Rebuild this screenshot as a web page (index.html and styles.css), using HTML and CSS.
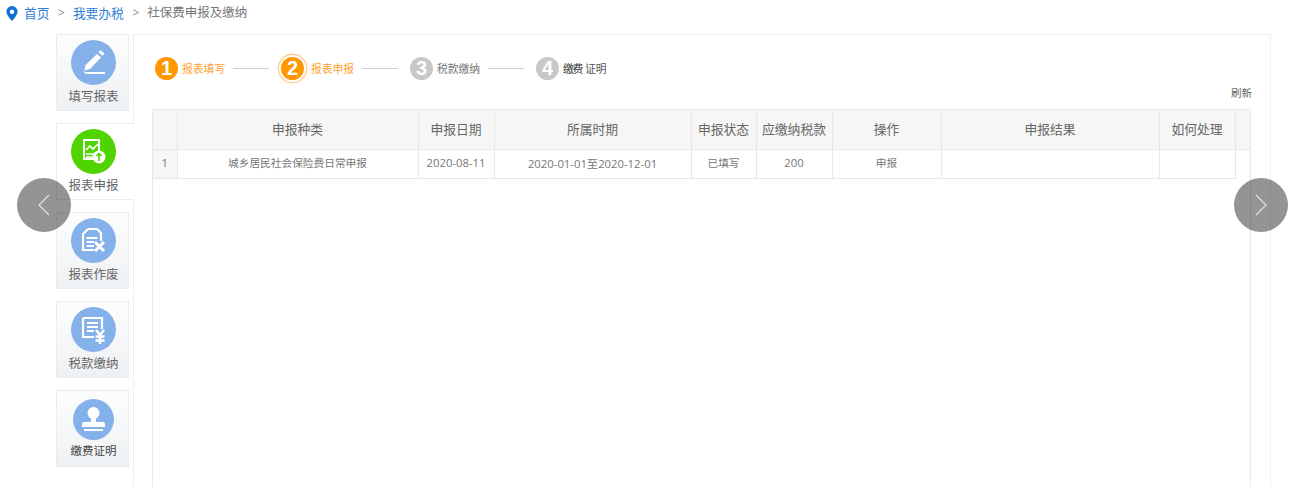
FILE: index.html
```html
<!DOCTYPE html>
<html lang="zh-CN">
<head>
<meta charset="utf-8">
<title>社保费申报及缴纳</title>
<link rel="stylesheet" href="styles.css">
</head>
<body>
<nav class="crumbs">
  <svg class="pin" width="12" height="15" viewBox="0 0 12 15"><path fill="#0f6fd6" fill-rule="evenodd" d="M6 0a5.6 5.6 0 0 0-5.6 5.6C.4 9.400 6 15 6 15s5.600-5.600 5.600-9.400A5.600 5.600 0 0 0 6 0zm0 3.500a2.200 2.200 0 1 1 0 4.400 2.200 2.200 0 0 1 0-4.400z"/></svg>
  <a class="crumb-link">首页</a><span class="sep">&gt;</span><a class="crumb-link">我要办税</a><span class="sep">&gt;</span><span class="crumb-current">社保费申报及缴纳</span>
</nav>
<div class="page">
  <aside class="tabs">
    <div class="tab">
      <span class="badge"><svg width="45" height="45" viewBox="0 0 45 45"><path fill="#fff" d="M29.500 10l4 3.500-2 2.200-4-3.500zM26 14l4 3.500-11 11.500-5.500 1.500 1-5.500zM11 30.500l3 1.500h20v2H15z"/></svg></span>
      <span class="tab-label">填写报表</span>
    </div>
    <div class="tab active">
      <span class="badge green"><svg width="45" height="45" viewBox="0 0 45 45"><path fill="none" stroke="#fff" stroke-width="2" d="M13 11h15v19H13z"/><path fill="none" stroke="#fff" stroke-width="1.600" d="M15 21l4-4 3 3 5-5M15 25h10M15 28h8"/><circle cx="28" cy="28" r="6.500" fill="#fff"/><path fill="none" stroke="#4fd400" stroke-width="1.600" d="M28 32v-7M25.500 27l2.500-2.500 2.500 2.500"/></svg></span>
      <span class="tab-label">报表申报</span>
    </div>
    <div class="tab">
      <span class="badge"><svg width="45" height="45" viewBox="0 0 45 45"><path fill="none" stroke="#fff" stroke-width="2.200" d="M17 11h9l4 4v9M17 11l-5 5v16h14"/><path fill="none" stroke="#fff" stroke-width="2" d="M15.500 20h11M15.500 24h10M15.500 28h8"/><rect x="23" y="23" width="12" height="12" fill="#85b1ea"/><path fill="none" stroke="#fff" stroke-width="3" d="M24 24l9 9M33 24l-9 9"/></svg></span>
      <span class="tab-label">报表作废</span>
    </div>
    <div class="tab">
      <span class="badge"><svg width="45" height="45" viewBox="0 0 45 45"><path fill="none" stroke="#fff" stroke-width="2.200" d="M12 11h19v12M12 11v19h13"/><path fill="none" stroke="#fff" stroke-width="2" d="M16 16h11M16 20h11M16 24h7"/><rect x="23" y="22" width="12" height="15" fill="#85b1ea"/><path fill="none" stroke="#fff" stroke-width="2.600" d="M25 23l4 5 4-5M29 28v9M24.500 29.500h9M24.500 33.500h9"/></svg></span>
      <span class="tab-label">税款缴纳</span>
    </div>
    <div class="tab last">
      <span class="badge small"><svg width="41" height="41" viewBox="0 0 41 41"><circle cx="20.500" cy="14" r="6" fill="#fff"/><path fill="#fff" d="M18 19h5v4h7a2 2 0 0 1 2 2v3H9v-3a2 2 0 0 1 2-2h7zM11 30h19v2H11z"/></svg></span>
      <span class="tab-label dark">缴费证明</span>
    </div>
  </aside>
  <main class="panel">
    <ol class="steps">
      <li class="step done"><span class="num">1</span><span class="step-label">报表填写</span></li>
      <li class="rule"></li>
      <li class="step current"><span class="num">2</span><span class="step-label">报表申报</span></li>
      <li class="rule"></li>
      <li class="step"><span class="num">3</span><span class="step-label">税款缴纳</span></li>
      <li class="rule"></li>
      <li class="step"><span class="num">4</span><span class="step-label dark"><span class="tight">缴费</span> 证明</span></li>
    </ol>
    <div class="toolbar"><a class="refresh">刷新</a></div>
    <div class="grid">
      <table>
        <colgroup>
          <col class="c-idx"><col class="c-type"><col class="c-date"><col class="c-period"><col class="c-state"><col class="c-tax"><col class="c-op"><col class="c-result"><col class="c-how"><col class="c-gutter">
        </colgroup>
        <thead>
          <tr><th></th><th>申报种类</th><th>申报日期</th><th>所属时期</th><th>申报状态</th><th>应缴纳税款</th><th>操作</th><th>申报结果</th><th>如何处理</th><th></th></tr>
        </thead>
        <tbody>
          <tr><td class="idx digits">1</td><td>城乡居民社会保险费日常申报</td><td class="digits">2020-08-11</td><td class="digits">2020-01-01至2020-12-01</td><td>已填写</td><td class="digits">200</td><td>申报</td><td></td><td></td><td class="gutter"></td></tr>
        </tbody>
      </table>
    </div>
  </main>
</div>
<button class="arrow prev" aria-label="上一页"><svg width="14" height="24" viewBox="0 0 14 24"><path fill="none" stroke="#e4e4e4" stroke-width="1.200" d="M12 2L2 12l10 10"/></svg></button>
<button class="arrow next" aria-label="下一页"><svg width="14" height="24" viewBox="0 0 14 24"><path fill="none" stroke="#e4e4e4" stroke-width="1.200" d="M2 2l10 10L2 22"/></svg></button>
</body>
</html>
```
FILE: styles.css
```css
* { box-sizing: border-box; }
html, body { margin: 0; height: 487px; overflow: hidden; }
body {
  position: relative;
  background: #fff;
  color: #666;
  font-family: "Open Sans", "Noto Sans CJK SC", sans-serif;
  font-size: 12px;
}
.crumbs {
  display: flex;
  align-items: center;
  height: 26px;
  padding-left: 6px;
  font-size: 12.75px;
  line-height: 26px;
}
.pin { margin-right: 6px; }
.crumb-link { color: #2f7fd8; }
.crumb-current { color: #777; font-size: 12.5px; }
.sep { margin: 0 8px 0 8.5px; color: #888; font-size: 12px; }
.page {
  display: flex;
  align-items: flex-start;
  padding: 8px 43px 0 56px;
}
.tabs {
  position: relative;
  z-index: 1;
  display: flex;
  flex: 0 0 78px;
  flex-direction: column;
}
.tab {
  display: flex;
  flex-direction: column;
  align-items: center;
  width: 73px;
  height: 76.5px;
  margin-bottom: 12.5px;
  padding: 5px 0 0 2px;
  border: 1px solid #e9edf2;
  background: linear-gradient(#fdfdfd, #eef1f3);
}
.tab.active {
  width: 78px;
  padding-right: 6px;
  border-right: 0;
  background: #fff;
}
.badge {
  display: flex;
  align-items: center;
  justify-content: center;
  width: 45px;
  height: 45px;
  border-radius: 50%;
  background: #85b1ea;
}
.badge.green { background: #4fd400; }
.badge.small { width: 41px; height: 41px; margin-top: 3px; }
.tab-label {
  margin-top: 3px;
  color: #666;
  font-size: 12.5px;
  line-height: 18px;
  white-space: nowrap;
}
.tab-label.dark { margin-top: 2px; color: #444; font-size: 11.5px; }
.panel {
  flex: 1;
  height: 460px;
  margin-left: -1px;
  padding: 19px 19px 0 18px;
  border: 1px solid #eceff3;
  border-bottom: 0;
}
.steps {
  display: flex;
  align-items: center;
  height: 29px;
  margin: 0;
  padding: 0 0 0 3px;
  list-style: none;
}
.step { display: flex; align-items: center; }
.num {
  display: flex;
  align-items: center;
  justify-content: center;
  width: 23px;
  height: 23px;
  border-radius: 50%;
  background: #c8c8c8;
  color: #fff;
  font-family: "Liberation Sans", sans-serif;
  font-size: 20px;
  font-weight: 700;
}
.step-label {
  margin-left: 4px;
  padding-bottom: 1px;
  color: #777;
  font-size: 10.8px;
  white-space: nowrap;
}
.step-label.dark { color: #555; }
.tight { letter-spacing: -1.2px; color: #333; }
.done .num, .current .num { background: #ff9800; }
.done .step-label, .current .step-label { color: #ff9f2e; }
.current .num { box-shadow: 0 0 0 2px #fff, 0 0 0 3.4px #ffcf95; }
.current .step-label { margin-left: 7px; }
.rule {
  width: 35.8px;
  height: 1px;
  margin: 0 12px 0 8px;
  background: #cfcfcf;
}
.toolbar {
  display: flex;
  justify-content: flex-end;
  height: 26px;
  padding-top: 2px;
  line-height: 16px;
  margin-right: -1px;
}
.refresh { color: #666; font-size: 10.5px; }
.grid {
  width: 1099px;
  height: 400px;
  border: 1px solid #e8e8e8;
  border-bottom: 0;
}
table {
  width: 100%;
  border-collapse: collapse;
  table-layout: fixed;
}
.c-idx { width: 24px; }
.c-type { width: 241px; }
.c-date { width: 76px; }
.c-period { width: 197px; }
.c-state { width: 65px; }
.c-tax { width: 76px; }
.c-op { width: 109px; }
.c-result { width: 218px; }
.c-how { width: 76px; }
th, td {
  padding: 0 0 2px;
  border: 1px solid #e8e8e8;
  text-align: center;
  white-space: nowrap;
}
thead tr:first-child th { border-top: 0; }
th:first-child, td:first-child { border-left: 0; }
th:last-child { border-right: 0; }
th {
  height: 39px;
  background: #f6f6f6;
  color: #666;
  font-size: 12.8px;
  font-weight: 400;
}
td {
  height: 29px;
  color: #777;
  font-size: 10.7px;
}
td.digits { font-size: 11.3px; }
td.idx { background: #f6f6f6; }
td.gutter { border: 0; }
.arrow {
  position: absolute;
  z-index: 2;
  top: 178px;
  display: flex;
  align-items: center;
  justify-content: center;
  width: 54px;
  height: 54px;
  padding: 0;
  border: 0;
  border-radius: 50%;
  background: rgba(0, 0, 0, 0.42);
}
.arrow.prev { left: 17px; }
.arrow.next { left: 1234px; }
```
